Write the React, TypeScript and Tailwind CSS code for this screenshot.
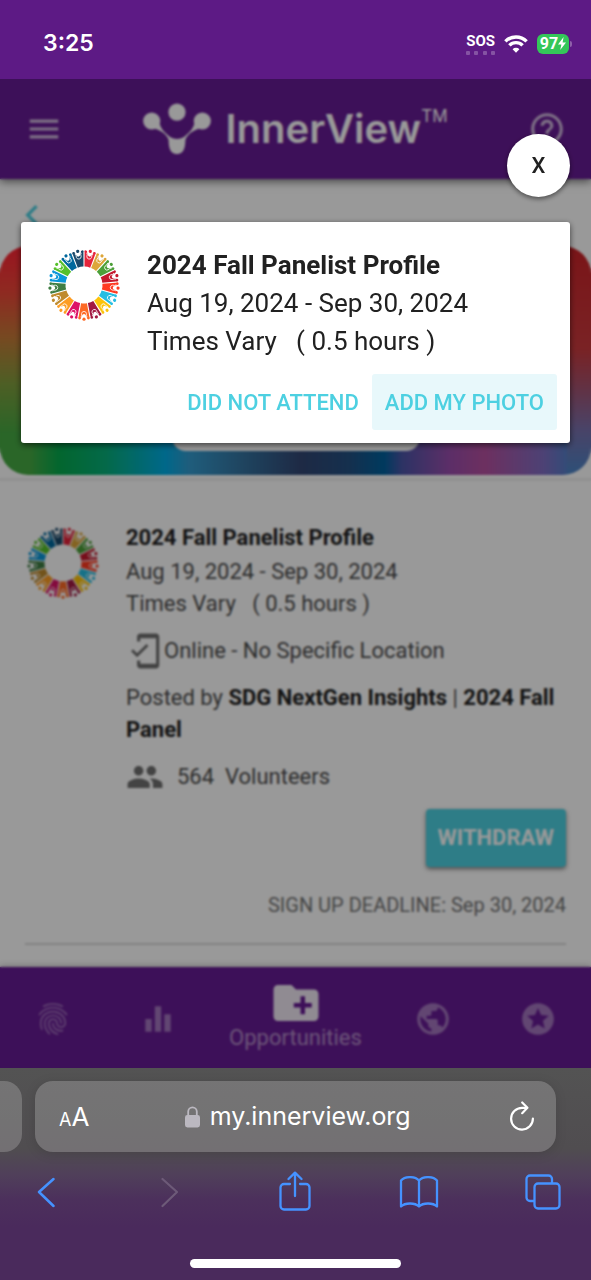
import React from "react";
import {
  MdChevronLeft,
  MdCreateNewFolder,
  MdEqualizer,
  MdFingerprint,
  MdHelpOutline,
  MdMenu,
  MdMobileFriendly,
  MdPeople,
  MdPublic,
  MdStars,
} from "react-icons/md";

const goalColors = [
  "#E5243B", "#DDA63A", "#4C9F38", "#C5192D", "#FF3A21", "#26BDE2", "#FCC30B", "#A21942", "#FD6925",
  "#DD1367", "#FD9D24", "#BF8B2E", "#3F7E44", "#0A97D9", "#56C02B", "#00689D", "#19486A",
];

function GoalWheel() {
  return (
    <svg viewBox="-36 -36 72 72" className="size-[72px] shrink-0" role="img" aria-label="SDG wheel">
      {goalColors.map((color, i) => (
        <g key={color} transform={`rotate(${(i + 0.5) * (360 / 17)})`} fill={color}>
          <path d="M-2.9 -18.2 Q0 -18.8 2.9 -18.2 L5.3 -31.5 Q5 -33 3.4 -32.8 L-3.4 -32.8 Q-5 -33 -5.3 -31.5 Z" />
          <path
            d="M-3.9 -33.6 L-2.4 -30.6 V-28.4 Q-2 -26.4 0 -26.4 Q2 -26.4 2.4 -28.4 V-30.6 L3.9 -33.6"
            fill="none"
            stroke="#fff"
            strokeWidth="0.8"
          />
          <path d="M-3.4 -34 L-2 -30.5 H2 L3.4 -34 Z" fill="#fff" />
          <circle cy="-30.6" r="1.7" fill="#fff" />
          <circle cy="-34.2" r="1.6" />
          <circle cx="-4.4" cy="-33" r="1.4" />
          <circle cx="4.4" cy="-33" r="1.4" />
        </g>
      ))}
    </svg>
  );
}

function StatusBar() {
  return (
    <div className="flex h-[79px] shrink-0 items-center justify-between bg-[#5d1a85] pr-[19px] pl-[43px] pt-2 text-white">
      <time className="font-['Inter',sans-serif] text-[23px] font-semibold">3:25</time>
      <div className="flex items-center gap-[9px]">
        <div className="flex flex-col gap-[2px]">
          <span className="font-['Roboto',sans-serif] text-[15px] leading-[16px] font-bold">SOS</span>
          <div className="flex justify-between">
            {[0, 1, 2, 3].map((n) => (
              <i key={n} className="size-1 rounded-[1px] bg-white/25" />
            ))}
          </div>
        </div>
        <svg viewBox="0 0 24 18" className="h-[18px] w-[24px]" fill="none" stroke="#fff" strokeWidth="3.4" aria-label="Wi-Fi">
          <path d="M1.4 6.4 A15 15 0 0 1 22.6 6.4" />
          <path d="M5.4 10.4 A9.3 9.3 0 0 1 18.6 10.4" />
          <path d="M12 17.8 L8.6 14.2 A4.8 4.8 0 0 1 15.4 14.2 Z" fill="#fff" stroke="none" />
        </svg>
        <div className="flex items-center gap-[1px]">
          <div className="flex h-[20px] w-[32px] items-center justify-center rounded-[6px] bg-[#34c759]">
            <span className="font-['Roboto',sans-serif] text-[16px] leading-none font-bold">97</span>
            <svg viewBox="0 0 8 13" className="h-[13px] w-[8px]" fill="#fff" aria-hidden="true">
              <path d="M5.6 0 L0 7.4 H3.4 L2.2 13 L8 5.4 H4.6 Z" />
            </svg>
          </div>
          <i className="h-[6px] w-[2px] rounded-r bg-white/30" />
        </div>
      </div>
    </div>
  );
}

function Logo() {
  return (
    <div className="flex items-center gap-[14px] text-white">
      <svg viewBox="0 0 68 52" className="h-[52px] w-[68px]" fill="#fff" aria-hidden="true">
        <circle cx="8.7" cy="18" r="8.6" />
        <circle cx="34" cy="9.2" r="8.6" />
        <circle cx="59.3" cy="18" r="8.6" />
        <path d="M12 25.8 L16.8 20.5 Q17 26 27 34 Q34 38 41 34 Q51 26 51.2 20.5 L56 25.8 C50 27 43.5 32.5 42.4 37 C42.2 41 42.4 51 34 51 C25.6 51 25.8 41 25.6 37 C24.5 32.5 18 27 12 25.8 Z" />
      </svg>
      <div className="flex items-start font-['Inter',sans-serif]">
        <span className="text-[40px] leading-[56px] font-semibold">InnerView</span>
        <span className="text-[17px] leading-[30px]">TM</span>
      </div>
    </div>
  );
}

function NavItem({ label, children }: { label: string; children: React.ReactNode }) {
  return (
    <button aria-label={label} className="flex flex-1 items-center justify-center pt-[3px] text-[38px] text-white/40">
      {children}
    </button>
  );
}

function Page() {
  return (
    <div className="flex flex-1 flex-col bg-white">
      <header className="z-10 flex h-[100px] items-center justify-between bg-[#671b94] px-[25px] text-[38px] text-white/70 shadow-[0_3px_8px_rgba(0,0,0,0.5)]">
        <button aria-label="Menu"><MdMenu /></button>
        <Logo />
        <button aria-label="Help"><MdHelpOutline /></button>
      </header>
      <div className="flex h-[67px] items-center px-3 pt-1">
        <a href="#back" aria-label="Back" className="text-[40px] text-[#4dd0e1]"><MdChevronLeft /></a>
      </div>
      <div className="flex h-[229px] items-end justify-center rounded-[28px] bg-[linear-gradient(180deg,#ff2335_0%,#ee4638_20%,#c67b38_40%,#829e3e_60%,#46aa43_82%),linear-gradient(180deg,#cb2328_0%,#cb3a3e_45%,#a8506b_60%,#7b71ad_80%,#4b85c8_100%),linear-gradient(90deg,#46aa43_5%,#05aa4e_10%,#07b07b_18%,#00ade6_28%,#349bcf_32%,#3473a0_41%,#324673_51%,#235082_59%,#00619d_65%,#4b55a7_68%,#994ead_76%,#b650a0_82%,#806ec3_92%,#4187cb_98%)] bg-[length:32px_100%,24px_100%,100%_100%] bg-[position:left,right,center] bg-no-repeat pb-6">
        <div className="h-10 w-[248px] rounded-[14px] bg-white" />
      </div>
      <div className="mt-[3px] h-[3px] bg-black/5" />
      <main className="px-[25px] font-['Roboto',sans-serif] text-[22px] leading-8 text-[#4c4c4c]">
        <article className="flex gap-[27px] pt-[41px]">
          <div className="pt-[5px] pl-[2px]"><GoalWheel /></div>
          <div className="min-w-0 flex-1">
            <h2 className="mb-[2px] font-bold text-[#222]">2024 Fall Panelist Profile</h2>
            <p>Aug 19, 2024 - Sep 30, 2024</p>
            <p className="whitespace-pre">Times Vary   ( 0.5 hours )</p>
            <div className="mt-[13px] flex h-9 items-center">
              <MdMobileFriendly className="size-[38px] text-[#707070]" />
              <span>Online - No Specific Location</span>
            </div>
            <p className="mt-[13px]">
              Posted by <b className="text-[#222]">SDG NextGen Insights</b> | <b className="text-[#222]">2024 Fall Panel</b>
            </p>
            <div className="mt-[13px] flex h-9 items-center">
              <MdPeople className="mr-[13px] size-[38px] text-[#707070]" />
              <span className="whitespace-pre">564  Volunteers</span>
            </div>
          </div>
        </article>
        <div className="mt-[14px] flex justify-end">
          <button className="h-[58px] rounded-[4px] bg-[#4dd0e1] px-3 font-bold text-white shadow-[0_2px_4px_rgba(0,0,0,0.5)]">WITHDRAW</button>
        </div>
        <p className="mt-[22px] text-right text-[20px] text-[#757575]">SIGN UP DEADLINE: Sep 30, 2024</p>
        <hr className="mt-[22px] border-t-2 border-black/15" />
      </main>
      <nav className="mt-auto flex h-[101px] bg-[#671b94] shadow-[0_-1px_6px_rgba(0,0,0,0.25)]">
        <NavItem label="Identity"><MdFingerprint /></NavItem>
        <NavItem label="Stats"><MdEqualizer /></NavItem>
        <button className="flex w-[170px] flex-col items-center pt-[9px] font-['Roboto',sans-serif] text-[22px] leading-[28px] text-white/50">
          <MdCreateNewFolder className="-mb-[6px] size-[54px] shrink-0 text-white/90" />
          <span>Opportunities</span>
        </button>
        <NavItem label="Community"><MdPublic /></NavItem>
        <NavItem label="Rewards"><MdStars /></NavItem>
      </nav>
    </div>
  );
}

function ProfileDialog() {
  return (
    <div className="absolute inset-0 z-20 flex flex-col bg-black/40 px-[21px] pt-[55px] font-['Roboto',sans-serif] text-[#212121] backdrop-blur-[1px]">
      <button
        aria-label="Close"
        className="size-[63px] self-end rounded-full bg-white text-[22px] font-medium shadow-[0_2px_5px_rgba(0,0,0,0.5)]"
      >
        X
      </button>
      <div role="dialog" aria-label="2024 Fall Panelist Profile" className="mt-[25px] rounded-[3px] bg-white pt-6 pb-[13px] shadow-[0_2px_6px_rgba(0,0,0,0.6)]">
        <div className="flex gap-[27px] pl-[27px] text-[26px] leading-[38px]">
          <div className="pt-[3px]"><GoalWheel /></div>
          <div>
            <h1 className="font-bold">2024 Fall Panelist Profile</h1>
            <p>Aug 19, 2024 - Sep 30, 2024</p>
            <p className="whitespace-pre">Times Vary   ( 0.5 hours )</p>
          </div>
        </div>
        <div className="mt-[14px] flex justify-end pr-[13px] text-[22px] font-medium text-[#4dd0e1]">
          <button className="h-14 px-[13px]">DID NOT ATTEND</button>
          <button className="h-14 rounded-[3px] bg-[#e8f8fb] px-[13px]">ADD MY PHOTO</button>
        </div>
      </div>
    </div>
  );
}

function BrowserBar() {
  return (
    <footer className="flex h-[212px] shrink-0 flex-col bg-[linear-gradient(180deg,#535353_0%,#504d50_38%,#50405a_50%,#4c305c_62%,#4a2a5c_75%)] pt-[13px]">
      <div className="flex h-[71px] gap-[13px] pr-[35px]">
        <div className="w-[22px] rounded-r-[18px] bg-white/20" />
        <div className="flex flex-1 items-center justify-between rounded-[18px] bg-white/20 pr-[22px] pl-6 font-['Inter',sans-serif] text-white shadow-[0_2px_12px_rgba(0,0,0,0.12)]">
          <button aria-label="Page settings" className="flex items-baseline">
            <span className="text-[18px]">A</span>
            <span className="text-[26px]">A</span>
          </button>
          <div className="flex items-center gap-[10px] pr-1">
            <svg viewBox="0 0 15 22" className="h-[22px] w-[15px]" aria-hidden="true">
              <path d="M3.2 10 V5.6 a4.3 4.3 0 0 1 8.6 0 V10" fill="none" stroke="#bbb8c0" strokeWidth="1.8" />
              <rect y="9" width="15" height="12.5" rx="2.4" fill="#bbb8c0" />
            </svg>
            <span className="text-[25px]">my.innerview.org</span>
          </div>
          <button aria-label="Reload">
            <svg viewBox="0 0 24 32" className="h-[32px] w-[24px]" fill="none" stroke="#fff" strokeWidth="2.2" strokeLinecap="round" strokeLinejoin="round">
              <path d="M17 6.800 H12 A10.900 10.900 0 1 0 22.900 17.600" />
              <path d="M12.200 1.500 L17.400 6.800 L12.200 12.200" />
            </svg>
          </button>
        </div>
      </div>
      <div className="flex h-20 items-center justify-between pr-7 pl-[26px] text-[#4592ff]">
        <button aria-label="Back" className="flex w-10 justify-center">
          <svg viewBox="0 0 18 32" className="h-[32px] w-[18px]" fill="none" stroke="currentColor" strokeWidth="2.5" strokeLinecap="round" strokeLinejoin="round">
            <path d="M16.500 3 L2 16 L16.500 30" />
          </svg>
        </button>
        <button aria-label="Forward" disabled className="flex w-10 justify-center text-[#6d5a78]">
          <svg viewBox="0 0 18 32" className="h-[32px] w-[18px]" fill="none" stroke="currentColor" strokeWidth="2.2" strokeLinecap="round" strokeLinejoin="round">
            <path d="M1.500 3 L16 16 L1.500 30" />
          </svg>
        </button>
        <button aria-label="Share" className="flex w-10 justify-center">
          <svg viewBox="0 0 32 42" className="h-[42px] w-[32px]" fill="none" stroke="currentColor" strokeWidth="2.3" strokeLinecap="round" strokeLinejoin="round">
            <path d="M11 13 H5 a3.500 3.500 0 0 0 -3.500 3.500 V35 A3.500 3.500 0 0 0 5 38.500 H27 A3.500 3.500 0 0 0 30.500 35 V16.500 A3.500 3.500 0 0 0 27 13 H21" />
            <path d="M16 25 V2 M9.500 8 L16 1.600 L22.500 8" />
          </svg>
        </button>
        <button aria-label="Bookmarks" className="flex w-10 justify-center">
          <svg viewBox="0 0 40 32" className="h-[32px] w-[40px]" fill="none" stroke="currentColor" strokeWidth="2.3" strokeLinejoin="round">
            <path d="M20 4.500 C16 0 6 0 2 4.500 V30.500 C6 26.500 16 26.500 20 30.500 C24 26.500 34 26.500 38 30.500 V4.500 C34 0 24 0 20 4.500 Z M20 4.500 V30.500" />
          </svg>
        </button>
        <button aria-label="Tabs" className="flex w-10 justify-center">
          <svg viewBox="0 0 36 36" className="size-[36px]" fill="none" stroke="currentColor" strokeWidth="2.3">
            <rect x="9.500" y="9.500" width="25" height="25" rx="3.500" />
            <path d="M9.500 27 H5 A3.500 3.500 0 0 1 1.500 23.500 V5 A3.500 3.500 0 0 1 5 1.500 H23.500 A3.500 3.500 0 0 1 27 5 V9.500" />
          </svg>
        </button>
      </div>
      <div className="mt-auto mb-3 h-[9px] w-[211px] self-center rounded-full bg-white" />
    </footer>
  );
}

export default function App() {
  return (
    <div className="flex min-h-screen flex-col">
      <StatusBar />
      <div className="relative flex flex-1 flex-col overflow-hidden">
        <Page />
        <ProfileDialog />
      </div>
      <BrowserBar />
    </div>
  );
}
